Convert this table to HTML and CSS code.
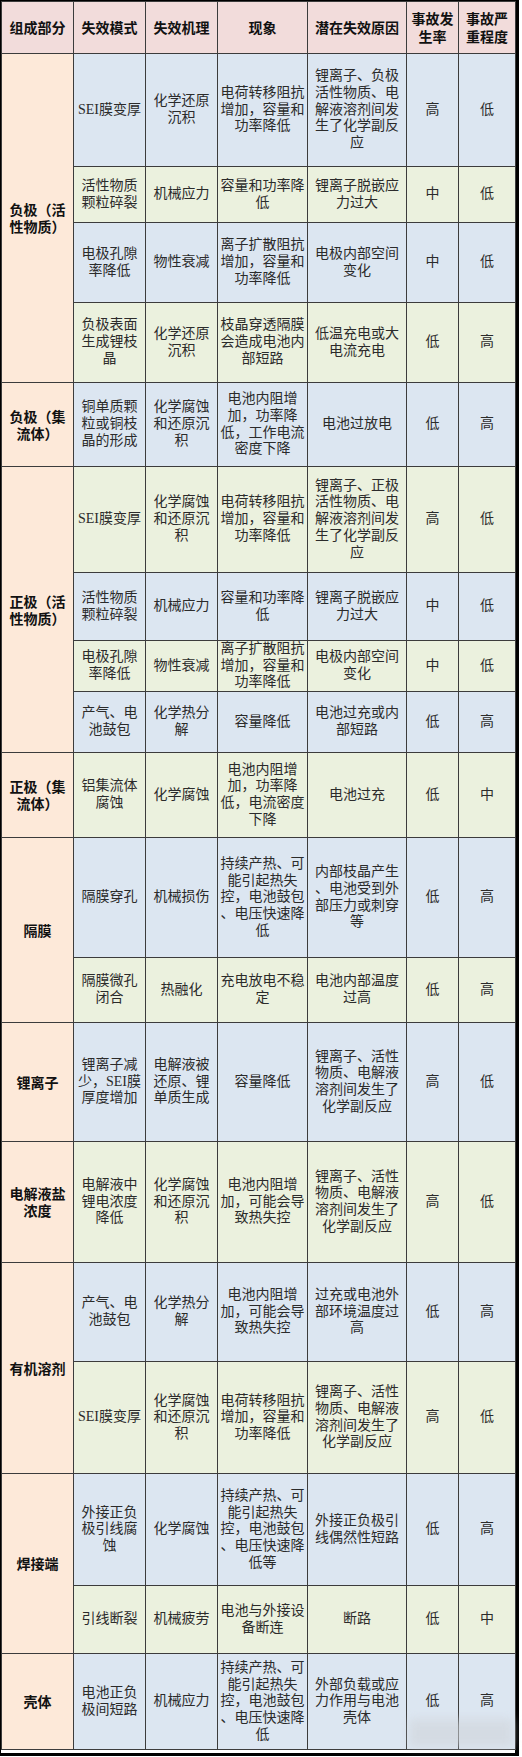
FILE: index.html
```html
<!DOCTYPE html>
<html lang="zh-CN">
<head>
<meta charset="utf-8">
<title>锂离子电池失效模式分析</title>
<link rel="stylesheet" href="styles.css">
</head>
<body>
<div class="frame">
<table class="fmea">
<colgroup>
<col class="c1"><col class="c2"><col class="c3"><col class="c4"><col class="c5"><col class="c6"><col class="c7">
</colgroup>
<thead>
<tr class="hdr">
<th>组成部分</th><th>失效模式</th><th>失效机理</th><th>现象</th><th>潜在失效原因</th><th>事故发<br>生率</th><th>事故严<br>重程度</th>
</tr>
</thead>
<tbody>
<tr class="b h113">
<td class="grp" rowspan="4">负极（活<br>性物质）</td>
<td>SEI膜变厚</td><td>化学还原<br>沉积</td><td>电荷转移阻抗<br>增加，容量和<br>功率降低</td><td>锂离子、负极<br>活性物质、电<br>解液溶剂间发<br>生了化学副反<br>应</td><td>高</td><td>低</td>
</tr>
<tr class="g h56">
<td>活性物质<br>颗粒碎裂</td><td>机械应力</td><td>容量和功率降<br>低</td><td>锂离子脱嵌应<br>力过大</td><td>中</td><td>低</td>
</tr>
<tr class="b h80">
<td>电极孔隙<br>率降低</td><td>物性衰减</td><td>离子扩散阻抗<br>增加，容量和<br>功率降低</td><td>电极内部空间<br>变化</td><td>中</td><td>低</td>
</tr>
<tr class="g h80">
<td>负极表面<br>生成锂枝<br>晶</td><td>化学还原<br>沉积</td><td>枝晶穿透隔膜<br>会造成电池内<br>部短路</td><td>低温充电或大<br>电流充电</td><td>低</td><td>高</td>
</tr>
<tr class="b h84">
<td class="grp">负极（集<br>流体）</td>
<td>铜单质颗<br>粒或铜枝<br>晶的形成</td><td>化学腐蚀<br>和还原沉<br>积</td><td>电池内阻增<br>加，功率降<br>低，工作电流<br>密度下降</td><td>电池过放电</td><td>低</td><td>高</td>
</tr>
<tr class="g h106">
<td class="grp" rowspan="4">正极（活<br>性物质）</td>
<td>SEI膜变厚</td><td>化学腐蚀<br>和还原沉<br>积</td><td>电荷转移阻抗<br>增加，容量和<br>功率降低</td><td>锂离子、正极<br>活性物质、电<br>解液溶剂间发<br>生了化学副反<br>应</td><td>高</td><td>低</td>
</tr>
<tr class="b h68">
<td>活性物质<br>颗粒碎裂</td><td>机械应力</td><td>容量和功率降<br>低</td><td>锂离子脱嵌应<br>力过大</td><td>中</td><td>低</td>
</tr>
<tr class="g h51">
<td>电极孔隙<br>率降低</td><td>物性衰减</td><td>离子扩散阻抗<br>增加，容量和<br>功率降低</td><td>电极内部空间<br>变化</td><td>中</td><td>低</td>
</tr>
<tr class="b h61">
<td>产气、电<br>池鼓包</td><td>化学热分<br>解</td><td>容量降低</td><td>电池过充或内<br>部短路</td><td>低</td><td>高</td>
</tr>
<tr class="g h85">
<td class="grp">正极（集<br>流体）</td>
<td>铝集流体<br>腐蚀</td><td>化学腐蚀</td><td>电池内阻增<br>加，功率降<br>低，电流密度<br>下降</td><td>电池过充</td><td>低</td><td>中</td>
</tr>
<tr class="b h120">
<td class="grp" rowspan="2">隔膜</td>
<td>隔膜穿孔</td><td>机械损伤</td><td>持续产热、可<br>能引起热失<br>控，电池鼓包<br>、电压快速降<br>低</td><td>内部枝晶产生<br>、电池受到外<br>部压力或刺穿<br>等</td><td>低</td><td>高</td>
</tr>
<tr class="g h65">
<td>隔膜微孔<br>闭合</td><td>热融化</td><td>充电放电不稳<br>定</td><td>电池内部温度<br>过高</td><td>低</td><td>高</td>
</tr>
<tr class="b h119">
<td class="grp">锂离子</td>
<td>锂离子减<br>少，SEI膜<br>厚度增加</td><td>电解液被<br>还原、锂<br>单质生成</td><td>容量降低</td><td>锂离子、活性<br>物质、电解液<br>溶剂间发生了<br>化学副反应</td><td>高</td><td>低</td>
</tr>
<tr class="g h121">
<td class="grp">电解液盐<br>浓度</td>
<td>电解液中<br>锂电浓度<br>降低</td><td>化学腐蚀<br>和还原沉<br>积</td><td>电池内阻增<br>加，可能会导<br>致热失控</td><td>锂离子、活性<br>物质、电解液<br>溶剂间发生了<br>化学副反应</td><td>高</td><td>低</td>
</tr>
<tr class="b h99">
<td class="grp" rowspan="2">有机溶剂</td>
<td>产气、电<br>池鼓包</td><td>化学热分<br>解</td><td>电池内阻增<br>加，可能会导<br>致热失控</td><td>过充或电池外<br>部环境温度过<br>高</td><td>低</td><td>高</td>
</tr>
<tr class="g h112">
<td>SEI膜变厚</td><td>化学腐蚀<br>和还原沉<br>积</td><td>电荷转移阻抗<br>增加，容量和<br>功率降低</td><td>锂离子、活性<br>物质、电解液<br>溶剂间发生了<br>化学副反应</td><td>高</td><td>低</td>
</tr>
<tr class="b h112">
<td class="grp" rowspan="2">焊接端</td>
<td>外接正负<br>极引线腐<br>蚀</td><td>化学腐蚀</td><td>持续产热、可<br>能引起热失<br>控，电池鼓包<br>、电压快速降<br>低等</td><td>外接正负极引<br>线偶然性短路</td><td>低</td><td>高</td>
</tr>
<tr class="g h68">
<td>引线断裂</td><td>机械疲劳</td><td>电池与外接设<br>备断连</td><td>断路</td><td>低</td><td>中</td>
</tr>
<tr class="b h96">
<td class="grp">壳体</td>
<td>电池正负<br>极间短路</td><td>机械应力</td><td>持续产热、可<br>能引起热失<br>控，电池鼓包<br>、电压快速降<br>低</td><td>外部负载或应<br>力作用与电池<br>壳体</td><td>低</td><td>高</td>
</tr>
</tbody>
</table>
<div class="smudge"></div>
</div>
</body>
</html>
```

FILE: styles.css
```css
html, body {
  margin: 0;
  padding: 0;
  background: #ffffff;
}

.frame {
  position: relative;
  width: 514px;
  border-left: 1px solid #000;
  border-top: 1px solid #000;
  border-right: 4px solid #000;
  border-bottom: 3px solid #000;
  padding-bottom: 3px;
}

.fmea {
  border-collapse: collapse;
  table-layout: fixed;
  width: 514px;
  font-family: "Liberation Serif", "Noto Sans CJK SC", serif;
  font-size: 14px;
  line-height: 16.7px;
  color: #2b2b2b;
}

.c1 { width: 72px; }
.c2 { width: 72px; }
.c3 { width: 72px; }
.c4 { width: 90px; }
.c5 { width: 99px; }
.c6 { width: 52px; }
.c7 { width: 57px; }

.fmea th,
.fmea td {
  border: 1px solid #3c3c3c;
  padding: 0;
  text-align: center;
  vertical-align: middle;
  white-space: nowrap;
  overflow: visible;
}

.fmea th {
  background: #f2dcdb;
  font-family: "Noto Sans CJK SC", sans-serif;
  font-weight: 700;
  color: #111;
  line-height: 17.6px;
}

.hdr { height: 52px; }

.b td { background: #dce6f1; }
.g td { background: #ebf1de; }

.fmea td.grp {
  background: #fde9d9;
  font-family: "Noto Sans CJK SC", sans-serif;
  font-weight: 700;
  color: #111;
}

.h51 { height: 51px; }
.h56 { height: 56px; }
.h61 { height: 61px; }
.h65 { height: 65px; }
.h68 { height: 68px; }
.h80 { height: 80px; }
.h84 { height: 84px; }
.h85 { height: 85px; }
.h96 { height: 96px; }
.h99 { height: 99px; }
.h106 { height: 106px; }
.h112 { height: 112px; }
.h113 { height: 113px; }
.h119 { height: 119px; }
.h120 { height: 120px; }
.h121 { height: 121px; }

.smudge {
  position: absolute;
  left: 408px;
  top: 1718px;
  width: 104px;
  height: 28px;
  background: #cfd3d8;
  opacity: 0.55;
  filter: blur(5px);
}
```
